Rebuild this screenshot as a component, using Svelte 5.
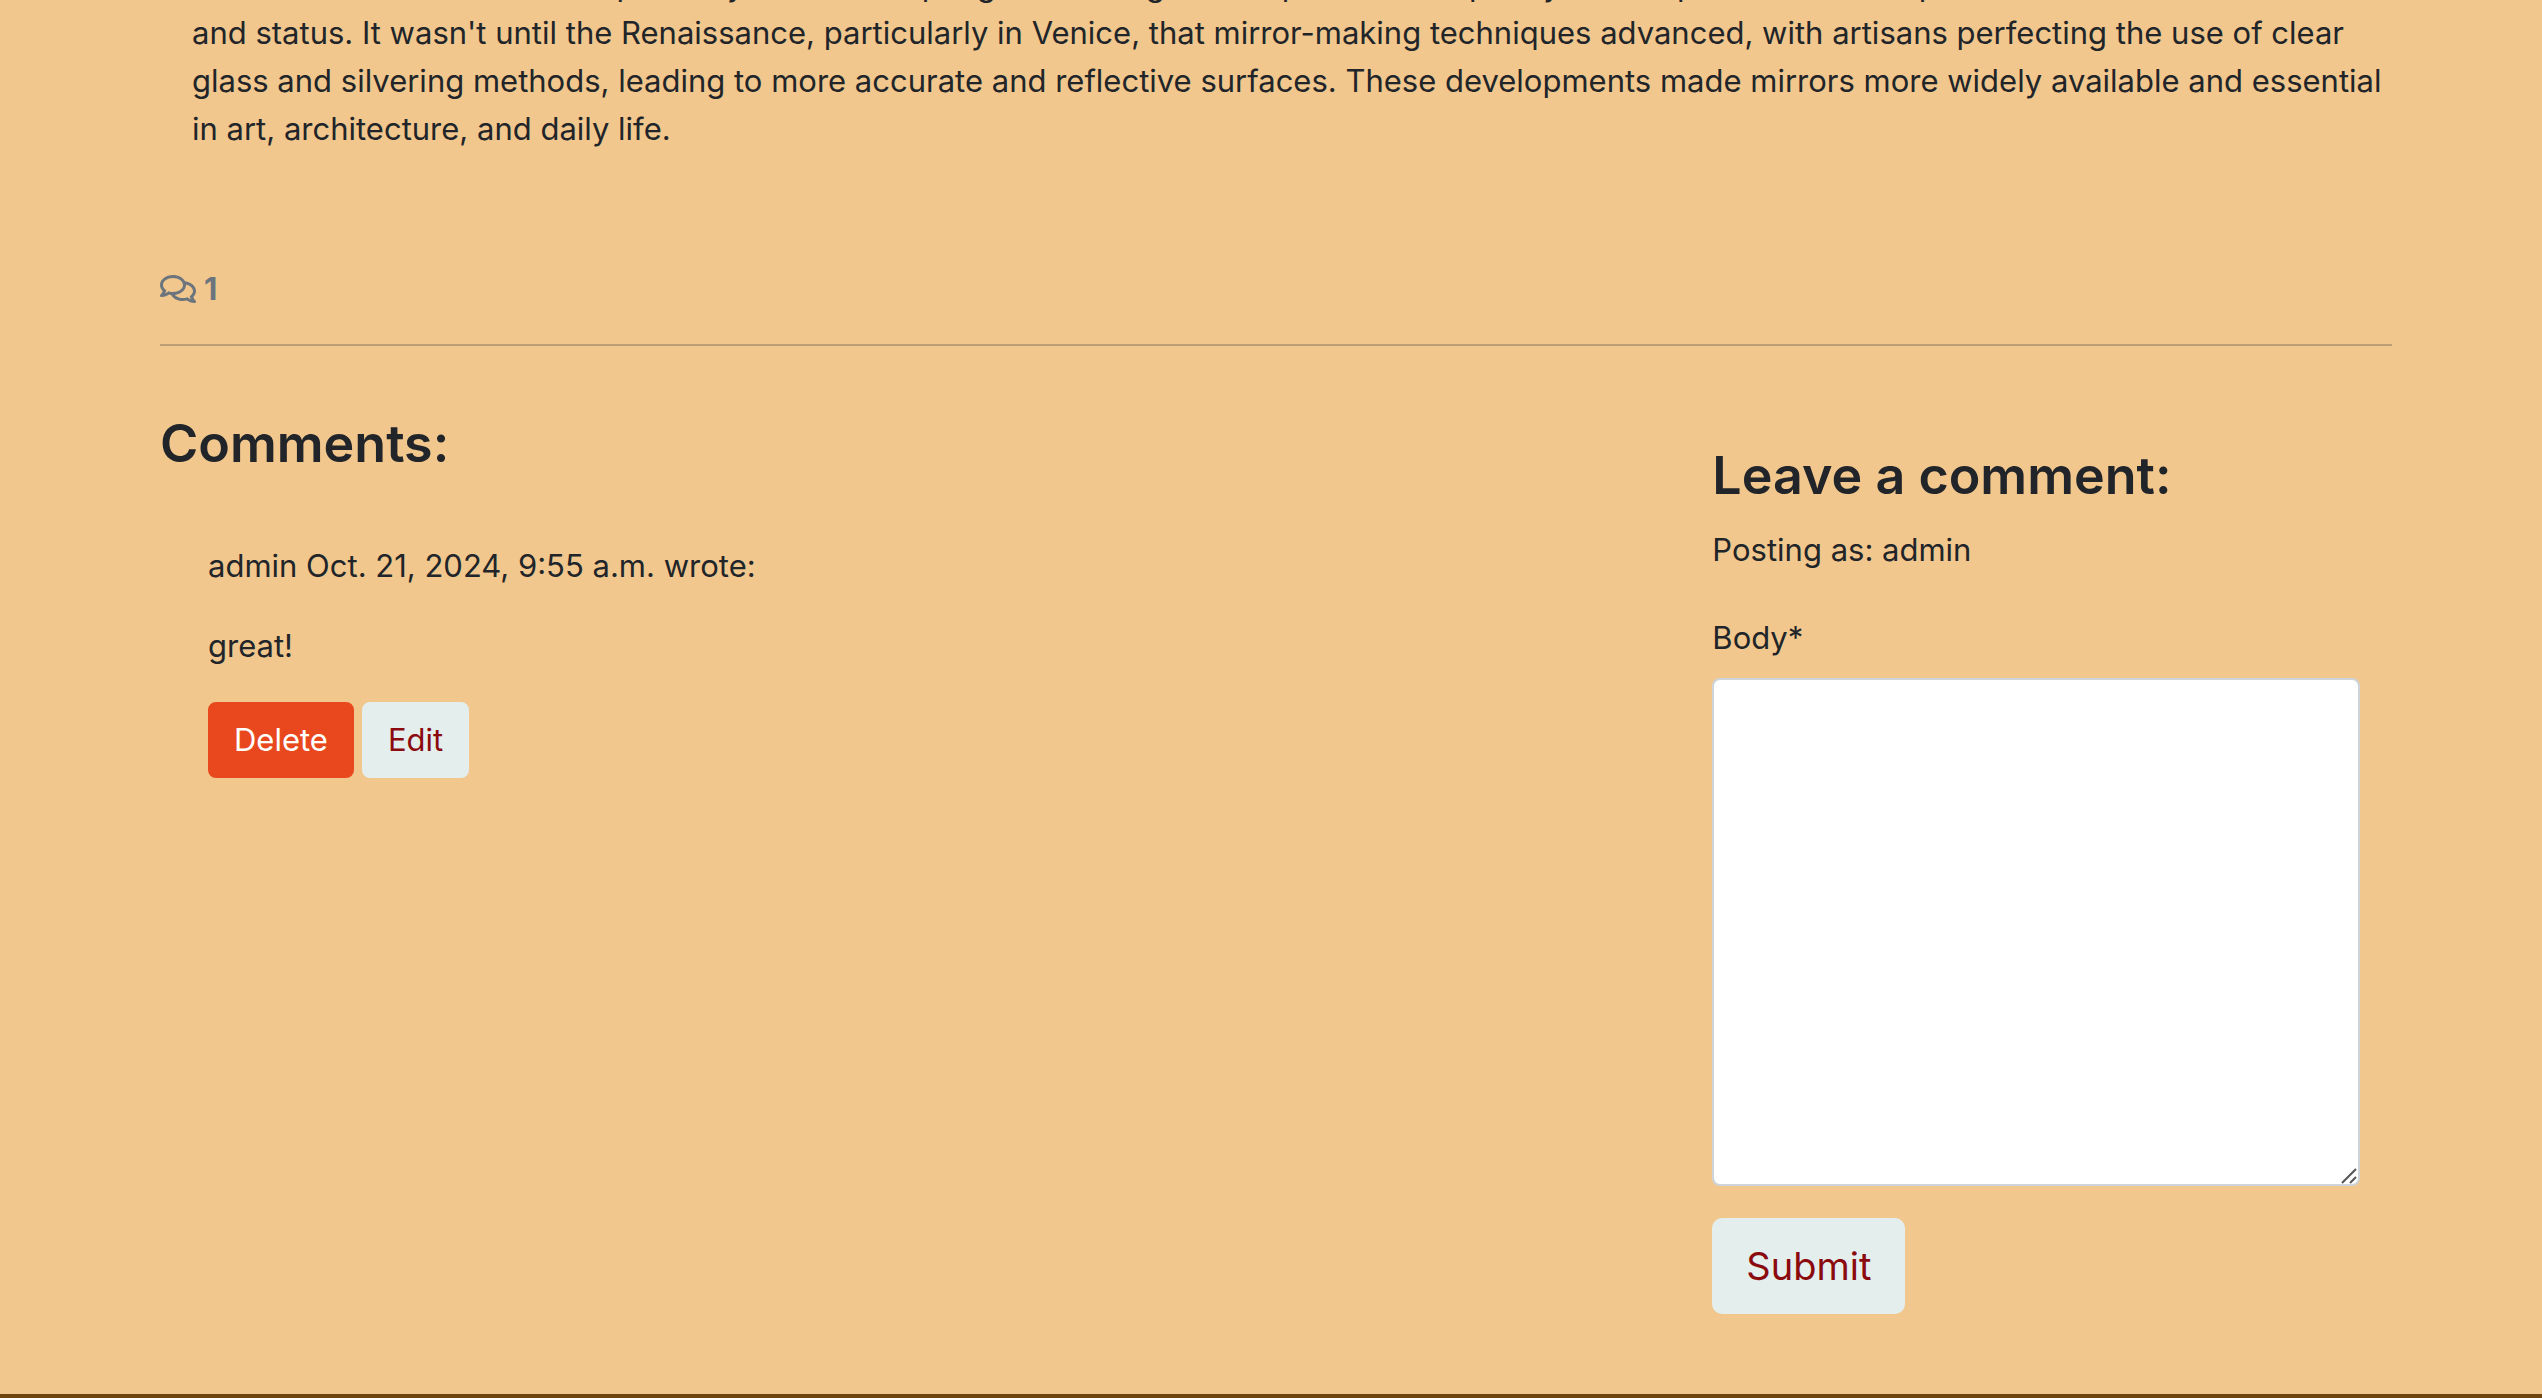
<script>
  let body = $state('');
</script>

<main class="page">
  <article class="story">
    <p>
      In former times mirrors were primarily used in adapting ambient light and space and as purely artistic pieces that held power and denoted wealth<br />
      and status. It wasn't until the Renaissance, particularly in Venice, that mirror-making techniques advanced, with artisans perfecting the use of clear
      glass and silvering methods, leading to more accurate and reflective surfaces. These developments made mirrors more widely available and essential
      in art, architecture, and daily life.
    </p>
  </article>

  <div class="count">
    <svg viewBox="0 0 576 512" aria-hidden="true">
      <path d="M532 386.2c27.5-27.1 44-61.1 44-98.2 0-80-76.5-146.1-176.2-157.9C368.3 72.5 294.3 32 208 32 93.1 32 0 103.6 0 192c0 37 16.5 71 44 98.2-15.3 30.7-37.3 54.5-37.7 54.9-6.3 6.7-8.1 16.5-4.4 25 3.6 8.5 12 14 21.2 14 53.5 0 96.7-20.2 125.2-38.8 9.2 2.1 18.7 3.7 28.4 4.9C208.1 407.6 281.8 448 368 448c20.8 0 40.8-2.4 59.8-6.8C456.3 459.7 499.4 480 553 480c9.2 0 17.5-5.5 21.2-14 3.6-8.5 1.9-18.3-4.4-25-.4-.3-22.5-24.1-37.8-54.8zm-392.8-92.3L122.1 305c-14.1 9.1-28.5 16.3-43.1 21.4 2.7-4.7 5.4-9.7 8-14.8l15.5-31.1L77.7 256C64.2 242.6 48 220.7 48 192c0-60.7 73.3-112 160-112s160 51.3 160 112-73.3 112-160 112c-16.5 0-33-1.9-49-5.6l-19.8-4.5zM498.3 352l-24.7 24.4 15.5 31.1c2.6 5.1 5.3 10.1 8 14.8-14.6-5.1-29-12.3-43.1-21.4l-17.1-11.1-19.9 4.6c-16 3.7-32.5 5.6-49 5.6-54 0-102.2-20.1-131.3-49.7C338 339.5 416 272.9 416 192c0-3.4-.4-6.7-.7-10C479.7 196.5 528 238.8 528 288c0 28.7-16.2 50.6-29.7 64z" />
    </svg>
    <strong>1</strong>
  </div>
  <hr />

  <div class="columns">
    <section class="comments">
      <h3>Comments:</h3>
      <div class="comment">
        <p>admin Oct. 21, 2024, 9:55 a.m. wrote:</p>
        <p>great!</p>
        <div class="actions">
          <button type="button" class="btn danger">Delete</button>
          <button type="button" class="btn">Edit</button>
        </div>
      </div>
    </section>

    <section class="leave">
      <h3>Leave a comment:</h3>
      <p>Posting as: admin</p>
      <form onsubmit={(event) => event.preventDefault()}>
        <label for="comment-body">Body*</label>
        <div class="field">
          <textarea id="comment-body" bind:value={body} required></textarea>
          <svg class="grip" viewBox="0 0 16 16" aria-hidden="true">
            <path d="M1 15L15 1M9 15L15 9" />
          </svg>
        </div>
        <button type="submit" class="btn large">Submit</button>
      </form>
    </section>
  </div>
</main>
<footer></footer>

<style>
  :global(body) {
    background: #f1c78d;
    overflow: hidden;
  }
  .page,
  .page button,
  .page textarea {
    font-family: Inter, 'Liberation Sans', sans-serif;
    font-size: 31px;
    line-height: 48px;
    color: #212529;
  }
  .page {
    margin: -39px 150px 0 160px;
  }
  p,
  h3 {
    margin: 0;
  }
  .story {
    padding-left: 32px;
  }
  .count {
    display: flex;
    align-items: center;
    gap: 8px;
    margin-top: 112px;
    color: #6c757d;
  }
  .count svg {
    width: 36px;
    height: 32px;
    fill: currentColor;
  }
  hr {
    height: 2px;
    margin: 31px 0 0;
    border: 0;
    background: #bd9f76;
  }
  .columns {
    display: grid;
    grid-template-columns: 60fr 29fr;
    gap: 48px;
  }
  h3 {
    font-size: 52px;
    line-height: 68px;
    font-weight: 600;
  }
  .comments {
    padding-top: 64px;
  }
  .comment {
    display: grid;
    gap: 32px;
    padding: 64px 48px;
  }
  .actions {
    display: flex;
    gap: 8px;
  }
  .page .btn {
    padding: 12px 24px;
    border: 2px solid #e3eeed;
    border-radius: 8px;
    background: #e3eeed;
    color: #8b0a0e;
  }
  .page .btn.danger {
    border-color: #e9481e;
    background: #e9481e;
    color: #fff;
  }
  .page .btn.large {
    padding: 16px 32px;
    border-radius: 10px;
    font-size: 38px;
    line-height: 60px;
  }
  .leave {
    padding: 96px 32px 80px;
  }
  .leave p {
    margin-top: 16px;
  }
  form {
    display: flex;
    flex-direction: column;
    align-items: flex-start;
    margin-top: 40px;
  }
  .field {
    position: relative;
    display: flex;
    width: 100%;
    margin: 16px 0 32px;
  }
  .page textarea {
    box-sizing: border-box;
    width: 100%;
    height: 508px;
    margin: 0;
    padding: 12px 24px;
    border: 2px solid #ced4da;
    border-radius: 8px;
    background: #fff;
    resize: vertical;
  }
  textarea::-webkit-resizer {
    background: transparent;
  }
  .grip {
    position: absolute;
    right: 3px;
    bottom: 2px;
    width: 16px;
    height: 16px;
    fill: none;
    stroke: #555;
    stroke-width: 2;
    pointer-events: none;
  }
  footer {
    height: 4px;
    background: #6f430c;
  }
</style>
